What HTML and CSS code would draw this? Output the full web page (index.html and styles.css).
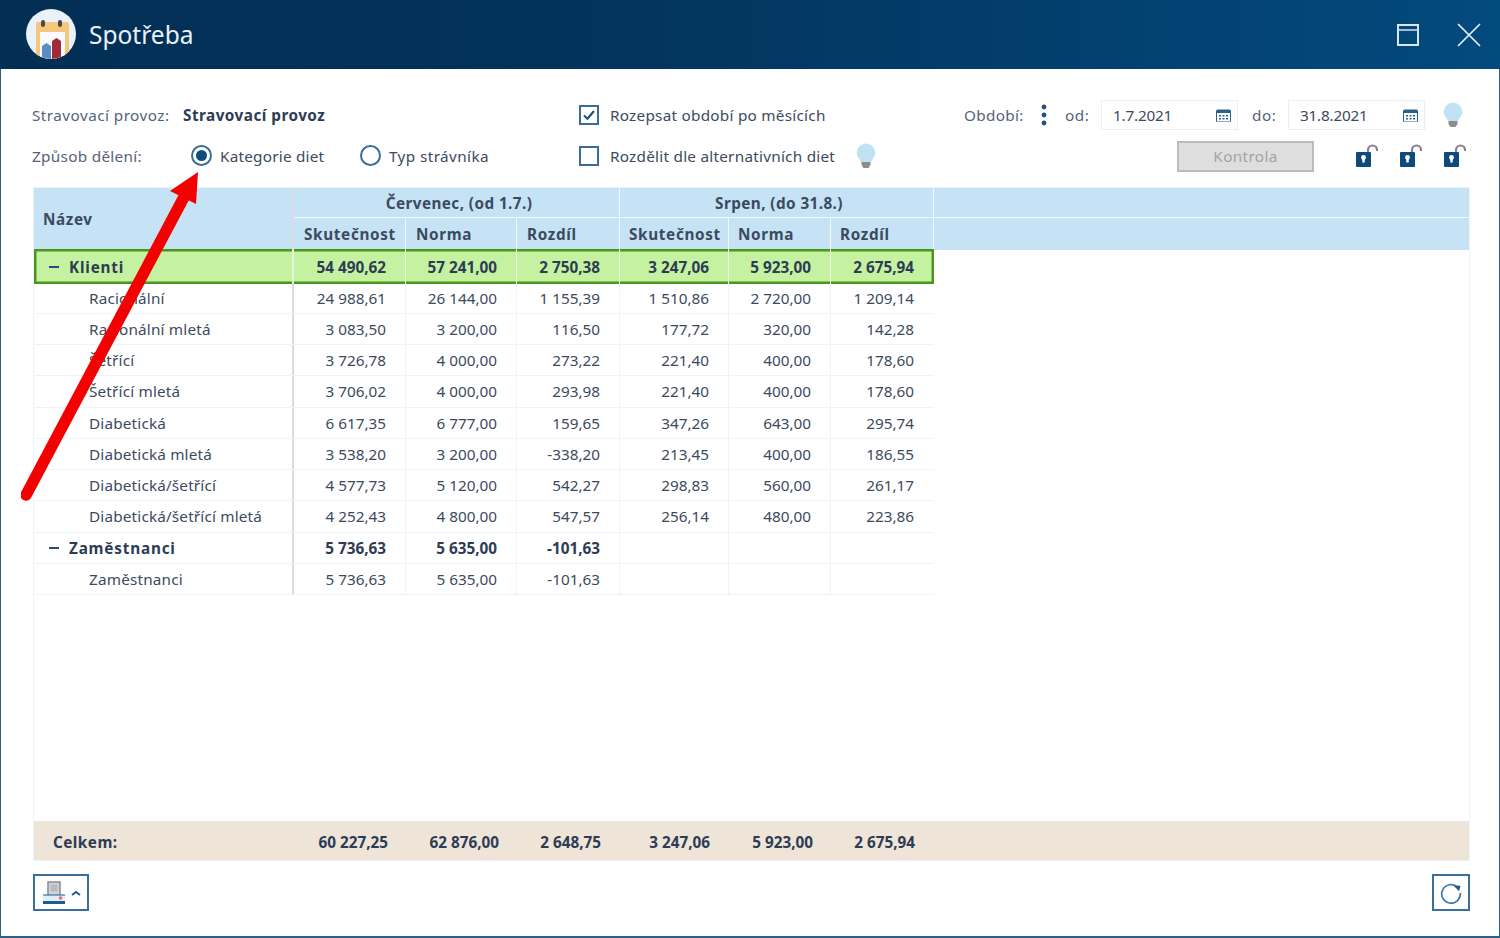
FILE: index.html
```html
<!DOCTYPE html>
<html lang="cs">
<head>
<meta charset="utf-8">
<title>Spotřeba</title>
<link rel="stylesheet" href="styles.css">
</head>
<body>
<div class="window">
  <header class="titlebar">
    <div class="logo">
      <svg width="50" height="50" viewBox="0 0 50 50">
        <defs><clipPath id="c"><circle cx="25" cy="25" r="25"/></clipPath></defs>
        <circle cx="25" cy="25" r="25" fill="#e9f2f9"/>
        <g clip-path="url(#c)">
          <rect x="10" y="13" width="33" height="38" rx="2" fill="#f7c67d"/>
          <rect x="14" y="23" width="25" height="28" fill="#fbfbfb"/>
          <rect x="15" y="11" width="4" height="7" rx="2" fill="#4a4a4a"/>
          <rect x="32" y="11" width="4" height="7" rx="2" fill="#4a4a4a"/>
          <path d="M16 37l4.500-3 4.500 3v14h-9z" fill="#5b8cc5"/>
          <path d="M26 32l4.500-3 4.500 3v19h-9z" fill="#a02b3a"/>
        </g>
      </svg>
    </div>
    <div class="title">Spotřeba</div>
    <div class="winbtns">
      <svg width="24" height="24" viewBox="0 0 24 24" fill="none" stroke="#d8e6f0" stroke-width="2"><rect x="2" y="2" width="20" height="20"/><path d="M2 7h20" stroke-width="1.5"/></svg>
      <svg width="26" height="26" viewBox="0 0 26 26" fill="none" stroke="#e8f0f6" stroke-width="1.7"><path d="M2 2l22 22M24 2L2 24"/></svg>
    </div>
  </header>

  <main class="content">
    <section class="filters">
      <div class="fline f1">
        <span class="lbl w-prov">Stravovací provoz:</span>
        <strong class="provname">Stravovací provoz</strong>
        <label class="check c1"><span class="box"><svg width="14" height="12" viewBox="0 0 14 12" fill="none" stroke="#1d5384" stroke-width="2.2"><path d="M2 6.500l3.500 3.200L12 2"/></svg></span>Rozepsat období po měsících</label>
        <span class="lbl obd">Období:</span>
        <svg class="dots" width="6" height="22" viewBox="0 0 6 22" fill="#1d5384"><circle cx="3" cy="3" r="2.4"/><circle cx="3" cy="11" r="2.4"/><circle cx="3" cy="19" r="2.4"/></svg>
        <span class="lbl od">od:</span>
        <div class="date d1"><span>1.7.2021</span><svg width="15" height="14" viewBox="0 0 15 14"><path d="M1.500 2h12a1 1 0 0 1 1 1v10a1 1 0 0 1-1 1h-12a1 1 0 0 1-1-1V3a1 1 0 0 1 1-1z" fill="#fff" stroke="#2a5f8f"/><path d="M1 2h13v3H1z" fill="#2a5f8f"/><path d="M3 7h2v1.500H3zM6.500 7h2v1.500h-2zM10 7h2v1.500h-2zM3 10h2v1.500H3zM6.500 10h2v1.500h-2zM10 10h2v1.500h-2z" fill="#2a5f8f"/></svg></div>
        <span class="lbl do">do:</span>
        <div class="date d2"><span>31.8.2021</span><svg width="15" height="14" viewBox="0 0 15 14"><path d="M1.500 2h12a1 1 0 0 1 1 1v10a1 1 0 0 1-1 1h-12a1 1 0 0 1-1-1V3a1 1 0 0 1 1-1z" fill="#fff" stroke="#2a5f8f"/><path d="M1 2h13v3H1z" fill="#2a5f8f"/><path d="M3 7h2v1.500H3zM6.500 7h2v1.500h-2zM10 7h2v1.500h-2zM3 10h2v1.500H3zM6.500 10h2v1.500h-2zM10 10h2v1.500h-2z" fill="#2a5f8f"/></svg></div>
        <svg class="bulb b1" width="20" height="26" viewBox="0 0 20 26"><path d="M10 0.500a9.300 9.300 0 0 1 9.300 9.300c0 4-3 6-4 9.200H4.700c-1-3.200-4-5.200-4-9.200A9.300 9.300 0 0 1 10 .5z" fill="#bfe3f5"/><path d="M5.500 19h9v3l-2 3h-5l-2-3z" fill="#8d8d8d"/></svg>
      </div>
      <div class="fline f2">
        <span class="lbl w-zp">Způsob dělení:</span>
        <label class="radio r1"><span class="rad on"><i></i></span>Kategorie diet</label>
        <label class="radio r2"><span class="rad"></span>Typ strávníka</label>
        <label class="check c2"><span class="box"></span>Rozdělit dle alternativních diet</label>
        <svg class="bulb b2" width="20" height="26" viewBox="0 0 20 26"><path d="M10 0.500a9.300 9.300 0 0 1 9.300 9.300c0 4-3 6-4 9.200H4.700c-1-3.200-4-5.200-4-9.200A9.300 9.300 0 0 1 10 .5z" fill="#bfe3f5"/><path d="M5.500 19h9v3l-2 3h-5l-2-3z" fill="#8d8d8d"/></svg>
        <button class="kontrola" type="button" disabled>Kontrola</button>
        <div class="locks">
          <svg width="22" height="24" viewBox="0 0 22 24"><path d="M12 9V6a4.500 4.500 0 0 1 9 0v1" fill="none" stroke="#8a7f90" stroke-width="2.200"/><rect x="0" y="8" width="15" height="15" rx="1" fill="#0f4a7c"/><circle cx="7.500" cy="13.500" r="2.400" fill="#fff"/><path d="M6.300 13.500h2.400v5H6.300z" fill="#fff"/></svg>
          <svg width="22" height="24" viewBox="0 0 22 24"><path d="M12 9V6a4.500 4.500 0 0 1 9 0v1" fill="none" stroke="#8a7f90" stroke-width="2.200"/><rect x="0" y="8" width="15" height="15" rx="1" fill="#0f4a7c"/><circle cx="7.500" cy="13.500" r="2.400" fill="#fff"/><path d="M6.300 13.500h2.400v5H6.300z" fill="#fff"/></svg>
          <svg width="22" height="24" viewBox="0 0 22 24"><path d="M12 9V6a4.500 4.500 0 0 1 9 0v1" fill="none" stroke="#8a7f90" stroke-width="2.200"/><rect x="0" y="8" width="15" height="15" rx="1" fill="#0f4a7c"/><circle cx="7.500" cy="13.500" r="2.400" fill="#fff"/><path d="M6.300 13.500h2.400v5H6.300z" fill="#fff"/></svg>
        </div>
      </div>
    </section>

    <section class="grid">
      <div class="ghead">
        <div class="gh-name">Název</div>
        <div class="gh-group g1">
          <div class="gh-title">Červenec, (od 1.7.)</div>
          <div class="gh-cols c3a"><span>Skutečnost</span><span>Norma</span><span>Rozdíl</span></div>
        </div>
        <div class="gh-group g2">
          <div class="gh-title">Srpen, (do 31.8.)</div>
          <div class="gh-cols c3b"><span>Skutečnost</span><span>Norma</span><span>Rozdíl</span></div>
        </div>
        <div class="gh-fill"><div></div><div></div></div>
      </div>
      <div class="gbody">
        <div class="row sel"><div class="nm"><i class="minus"></i><b class="nt">Klienti</b></div><span>54 490,62</span><span>57 241,00</span><span>2 750,38</span><span>3 247,06</span><span>5 923,00</span><span>2 675,94</span></div>
        <div class="row"><div class="nm sub">Racionální</div><span>24 988,61</span><span>26 144,00</span><span>1 155,39</span><span>1 510,86</span><span>2 720,00</span><span>1 209,14</span></div>
        <div class="row"><div class="nm sub">Racionální mletá</div><span>3 083,50</span><span>3 200,00</span><span>116,50</span><span>177,72</span><span>320,00</span><span>142,28</span></div>
        <div class="row"><div class="nm sub">Šetřící</div><span>3 726,78</span><span>4 000,00</span><span>273,22</span><span>221,40</span><span>400,00</span><span>178,60</span></div>
        <div class="row"><div class="nm sub">Šetřící mletá</div><span>3 706,02</span><span>4 000,00</span><span>293,98</span><span>221,40</span><span>400,00</span><span>178,60</span></div>
        <div class="row"><div class="nm sub">Diabetická</div><span>6 617,35</span><span>6 777,00</span><span>159,65</span><span>347,26</span><span>643,00</span><span>295,74</span></div>
        <div class="row"><div class="nm sub">Diabetická mletá</div><span>3 538,20</span><span>3 200,00</span><span>-338,20</span><span>213,45</span><span>400,00</span><span>186,55</span></div>
        <div class="row"><div class="nm sub">Diabetická/šetřící</div><span>4 577,73</span><span>5 120,00</span><span>542,27</span><span>298,83</span><span>560,00</span><span>261,17</span></div>
        <div class="row"><div class="nm sub">Diabetická/šetřící mletá</div><span>4 252,43</span><span>4 800,00</span><span>547,57</span><span>256,14</span><span>480,00</span><span>223,86</span></div>
        <div class="row grp"><div class="nm"><i class="minus"></i><b class="nt">Zaměstnanci</b></div><span>5 736,63</span><span>5 635,00</span><span>-101,63</span><span></span><span></span><span></span></div>
        <div class="row"><div class="nm sub">Zaměstnanci</div><span>5 736,63</span><span>5 635,00</span><span>-101,63</span><span></span><span></span><span></span></div>
      </div>
      <div class="gtotal"><div class="tl">Celkem:</div><span>60 227,25</span><span>62 876,00</span><span>2 648,75</span><span>3 247,06</span><span>5 923,00</span><span>2 675,94</span></div>
    </section>

    <footer class="foot">
      <button class="tool print" type="button">
        <svg width="24" height="24" viewBox="0 0 24 24"><rect x="6" y="1" width="12" height="14" fill="#d2d2d8" stroke="#8b8b96" stroke-width="1.500"/><rect x="8.500" y="3.500" width="7" height="7" fill="#b9b9c4"/><rect x="1" y="14" width="22" height="8" fill="#dfeef7"/><path d="M1 20h22v3H1z" fill="#1f5a8c"/><path d="M1 14h22" stroke="#1f5a8c"/><circle cx="18.500" cy="17" r="1.800" fill="#ee6b7a"/></svg>
        <svg width="10" height="6" viewBox="0 0 10 6" fill="none" stroke="#1f5a8c" stroke-width="2"><path d="M1 5l4-3 4 3"/></svg>
      </button>
      <button class="tool refresh" type="button">
        <svg width="22" height="22" viewBox="0 0 22 22"><path d="M17.500 5.200A9.300 9.300 0 1 0 20.300 11" fill="none" stroke="#3d7aa8" stroke-width="1.700"/><path d="M13.500 3.500l7 .3-1.500 5.500z" fill="#1f5a8c"/></svg>
      </button>
    </footer>
  </main>

  <svg class="arrow" width="230" height="340" viewBox="0 0 230 340">
    <path d="M5 326L163 28" stroke="#f40000" stroke-width="11.500" stroke-linecap="round" fill="none"/>
    <path d="M177 3L149 22 175 35z" fill="#f40000"/>
  </svg>
</div>
</body>
</html>
```
FILE: styles.css
```css
* { box-sizing: border-box; }
html, body { margin: 0; padding: 0; }
body { width: 1500px; height: 938px; overflow: hidden; background: #fff; font-family: "Noto Sans", "Open Sans", sans-serif; font-size: 15.3px; color: #3c4a60; }
.window { position: relative; width: 1500px; height: 938px; display: flex; flex-direction: column; border-left: 1px solid #2d6089; border-right: 1px solid #2d6089; border-bottom: 2px solid #2d6089; }
.titlebar { height: 69px; margin: 0 -1px; flex: none; display: flex; align-items: center; padding-left: 26px; background: linear-gradient(90deg, #032f55 0%, #03325a 35%, #034a7e 100%); }
.logo { width: 50px; height: 50px; margin-top: -1px; }
.logo svg { display: block; }
.title { margin-left: 13px; font-size: 24.5px; color: #e9f1f7; }
.winbtns { margin-left: auto; display: flex; align-items: center; gap: 36px; padding-right: 18px; }
.winbtns svg { display: block; }

.content { flex: 1; display: flex; flex-direction: column; padding: 0 29px 0 31px; min-height: 0; }
.filters { height: 118px; flex: none; padding-top: 25px; }
.fline { display: flex; align-items: center; height: 41px; white-space: nowrap; }
.lbl { color: #55637a; letter-spacing: 0.3px; }
.w-prov { width: 151px; letter-spacing: 0.45px; }
.provname { font-weight: 700; color: #2d3c55; width: 396px; letter-spacing: 0.47px; }
.check { display: flex; align-items: center; letter-spacing: 0.25px; }
.box { width: 20px; height: 20px; border: 2px solid #3a6b99; margin-right: 11px; display: flex; align-items: center; justify-content: center; }
.c1 { width: 385px; }
.obd { width: 77px; }
.dots { display: block; margin-right: 18px; }
.od { width: 36px; letter-spacing: 0.5px; }
.date { width: 137px; height: 30px; border: 1px solid #e8eff7; display: flex; align-items: center; justify-content: space-between; padding: 0 6px 0 11px; color: #3c4a60; letter-spacing: -0.2px; }
.date svg { display: block; }
.do { margin-left: 14px; width: 36px; letter-spacing: 0.5px; }
.b1 { margin-left: 18px; }
.w-zp { width: 159px; }
.radio { display: flex; align-items: center; letter-spacing: 0.22px; }
.rad { width: 21px; height: 21px; border-radius: 50%; border: 2px solid #3a6b99; margin-right: 8px; display: flex; align-items: center; justify-content: center; }
.rad i { width: 11px; height: 11px; border-radius: 50%; background: #114c80; }
.r1 { width: 169px; }
.r2 { width: 219px; letter-spacing: 0.4px; }
.bulb { display: block; }
.b2 { margin-left: 21px; }
.kontrola { width: 137px; height: 31px; margin: 1px 0 0 auto; background: #dedede; border: 2px solid #bcbcbc; color: #a3a3a3; font: inherit; letter-spacing: 0.35px; padding: 0; }
.locks { display: flex; gap: 22px; margin-left: 42px; margin-right: 4px; }
.locks svg { display: block; }

.grid { flex: none; height: 674px; margin-left: 1px; display: flex; flex-direction: column; border: 1px solid #eef2f9; }
.ghead { display: flex; height: 62px; flex: none; background: #c5e3f5; font-weight: 700; color: #3c4a60; }
.gh-name { width: 260px; display: flex; align-items: center; padding-left: 9px; border-right: 2px solid #d9dde2; flex: none; letter-spacing: 0.6px; }
.gh-group { flex: none; display: flex; flex-direction: column; border-right: 1px solid #f2f8fc; }
.g1 { width: 326px; }
.g2 { width: 314px; }
.gh-title { height: 30px; display: flex; align-items: center; justify-content: center; border-bottom: 1px solid #f2f8fc; letter-spacing: 0.42px; padding-left: 5px; }
.gh-cols { display: grid; flex: 1; align-items: center; }
.c3a { grid-template-columns: 111px 111px 103px; }
.c3b { grid-template-columns: 108px 102px 103px; }
.gh-cols span { padding-left: 10px; height: 100%; display: flex; align-items: center; border-left: 1px solid #f2f8fc; white-space: nowrap; letter-spacing: 0.65px; }
.gh-cols span:first-child { border-left: 0; }
.c3b span { padding-left: 9px; }
.gh-fill { flex: 1; display: flex; flex-direction: column; }
.gh-fill div:first-child { height: 30px; border-bottom: 1px solid #f2f8fc; }

.gbody { flex: 1; min-height: 0; width: 900px; }
.row { display: grid; grid-template-columns: 260px 111px 111px 103px 109px 102px 103px; height: 31.25px; align-items: stretch; border-bottom: 1px solid #eef2f9; color: #3c4a60; }
.row > span { display: flex; align-items: center; justify-content: flex-end; padding-right: 19px; border-left: 1px solid #eef2f9; white-space: nowrap; }
.row > span:first-of-type { border-left: 0; }
.nm { display: flex; align-items: center; border-right: 2px solid #d9dde2; letter-spacing: 0.17px; }
.nm.sub { padding-left: 55px; }
.nt { font-weight: 700; letter-spacing: 0.8px; }
.row.grp, .row.sel { font-weight: 700; color: #2d3c55; }
.row.grp .nm { padding-left: 15px; }
.row.sel { background: #c5f2a0; height: 35px; margin: -1px 0 -1.400px; width: 900px; box-shadow: inset 0 0 0 2.500px #4c951c; border-bottom: 0; }
.row.sel .nm { padding-left: 15px; border-right-color: #e8f3de; }
.row.sel > span { border-left-color: #f0f8e8; }
.minus { width: 10px; height: 2px; background: #1d4f80; margin-right: 10px; flex: none; }

.gtotal { flex: none; height: 39px; background: #eee4d8; border-top: 1px solid #e6e6e2; display: grid; grid-template-columns: 260px 113px 111px 102px 109px 103px 102px; width: 100%; align-items: center; font-weight: 700; color: #2d3c55; justify-content: start; padding-top: 2px; }
.tl { padding-left: 19px; letter-spacing: 0.45px; }
.gtotal > span { text-align: right; padding-right: 19px; white-space: nowrap; }

.foot { flex: 1; display: flex; justify-content: space-between; padding-top: 13px; padding-bottom: 25px; margin-left: 1px; align-items: flex-start; }
.tool { height: 37px; background: #fff; border: 2px solid #3a6f9c; padding: 0; display: flex; align-items: center; justify-content: center; }
.print { width: 56px; gap: 5px; }
.refresh { width: 38px; }

.arrow { position: absolute; left: 20px; top: 169px; pointer-events: none; }
```
